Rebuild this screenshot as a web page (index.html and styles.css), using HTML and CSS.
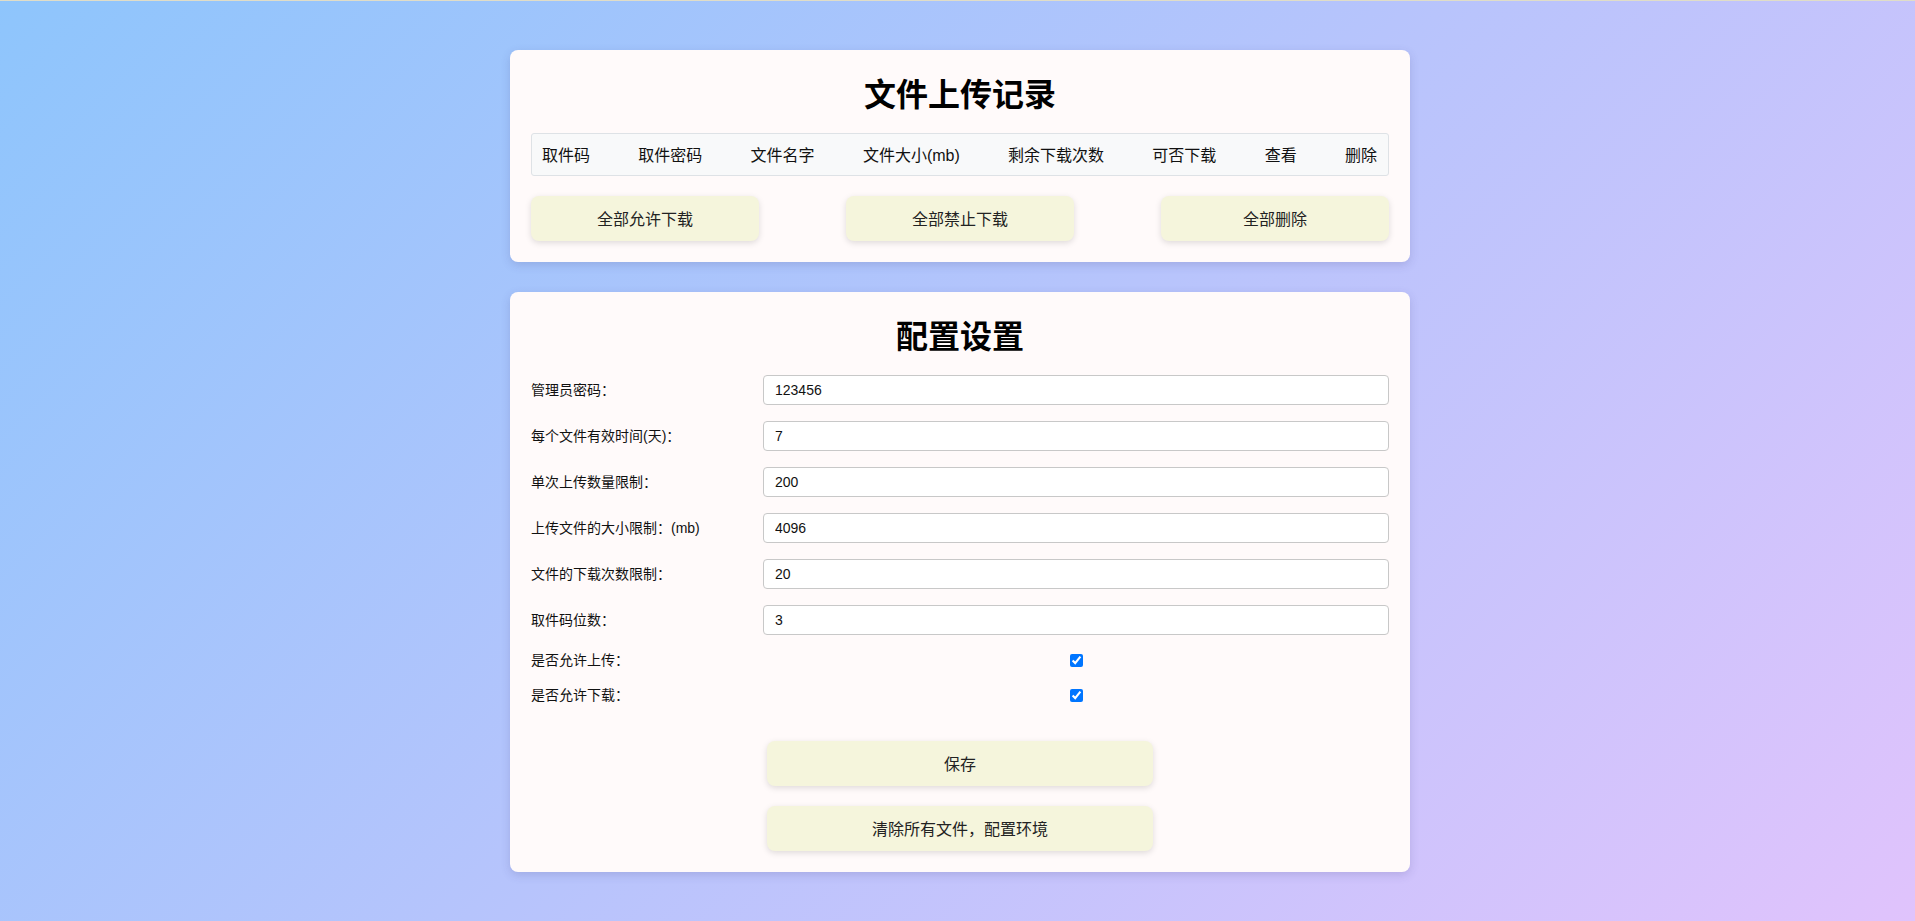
FILE: index.html
```html
<!DOCTYPE html>
<html lang="zh-CN">
<head>
<meta charset="utf-8">
<title>管理</title>
<link rel="stylesheet" href="styles.css">
</head>
<body>
<main class="page">
  <section class="card">
    <h1 class="card-title">文件上传记录</h1>
    <div class="record-head">
      <span>取件码</span>
      <span>取件密码</span>
      <span>文件名字</span>
      <span>文件大小(mb)</span>
      <span>剩余下载次数</span>
      <span>可否下载</span>
      <span>查看</span>
      <span>删除</span>
    </div>
    <div class="bulk-actions">
      <button class="btn btn-bulk">全部允许下载</button>
      <button class="btn btn-bulk">全部禁止下载</button>
      <button class="btn btn-bulk">全部删除</button>
    </div>
  </section>

  <section class="card">
    <h1 class="card-title">配置设置</h1>
    <form class="config-form">
      <div class="form-row">
        <label class="form-label">管理员密码：</label>
        <div class="form-field"><input class="text-input" type="text" value="123456"></div>
      </div>
      <div class="form-row">
        <label class="form-label">每个文件有效时间(天)：</label>
        <div class="form-field"><input class="text-input" type="text" value="7"></div>
      </div>
      <div class="form-row">
        <label class="form-label">单次上传数量限制：</label>
        <div class="form-field"><input class="text-input" type="text" value="200"></div>
      </div>
      <div class="form-row">
        <label class="form-label">上传文件的大小限制：(mb)</label>
        <div class="form-field"><input class="text-input" type="text" value="4096"></div>
      </div>
      <div class="form-row">
        <label class="form-label">文件的下载次数限制：</label>
        <div class="form-field"><input class="text-input" type="text" value="20"></div>
      </div>
      <div class="form-row">
        <label class="form-label">取件码位数：</label>
        <div class="form-field"><input class="text-input" type="text" value="3"></div>
      </div>
      <div class="form-row form-row-check">
        <label class="form-label">是否允许上传：</label>
        <div class="form-field form-field-center"><input class="check" type="checkbox" checked></div>
      </div>
      <div class="form-row form-row-check">
        <label class="form-label">是否允许下载：</label>
        <div class="form-field form-field-center"><input class="check" type="checkbox" checked></div>
      </div>
    </form>
    <div class="main-actions">
      <button class="btn btn-wide">保存</button>
      <button class="btn btn-wide">清除所有文件，配置环境</button>
    </div>
  </section>
</main>
</body>
</html>
```

FILE: styles.css
```css
html, body {
  margin: 0;
  padding: 0;
}

body {
  min-height: 100vh;
  box-sizing: border-box;
  border-top: 1px solid #e0ddc8;
  background: linear-gradient(135deg, #8ec5fc 0%, #e0c3fc 100%);
  font-family: "Liberation Sans", "Noto Sans CJK SC", sans-serif;
  color: #000;
  padding-left: 5px;
}

.page {
  width: 900px;
  margin: 0 auto;
  padding-top: 49px;
  display: flex;
  flex-direction: column;
  gap: 30px;
}

.card {
  box-sizing: border-box;
  width: 900px;
  padding: 21px;
  background: #fffafa;
  border-radius: 8px;
  box-shadow: 0 3px 10px rgba(60, 60, 120, 0.18);
}

.card-title {
  margin: -2px 0 18px;
  font-family: "Noto Sans CJK SC", sans-serif;
  font-size: 32px;
  line-height: 46px;
  font-weight: 700;
  text-align: center;
  color: #000;
}

.record-head {
  box-sizing: border-box;
  height: 43px;
  display: flex;
  align-items: center;
  justify-content: space-between;
  padding: 0 11px 2px 10px;
  background: #f8f9fa;
  border: 1px solid #dee2e6;
  border-radius: 3px;
  font-size: 16px;
  color: #111;
}

.bulk-actions {
  margin-top: 20px;
  display: flex;
  justify-content: space-between;
}

.btn {
  box-sizing: border-box;
  height: 45px;
  border: none;
  border-radius: 8px;
  background: #f5f5dc;
  box-shadow: 0 2px 6px rgba(0, 0, 0, 0.13);
  font-family: "Liberation Sans", "Noto Sans CJK SC", sans-serif;
  font-size: 16px;
  color: #222;
  padding: 0 0 2px;
}

.btn-bulk {
  width: 228px;
}

.config-form {
  display: flex;
  flex-direction: column;
  gap: 16px;
}

.form-row {
  display: flex;
  align-items: center;
  height: 30px;
}

.form-row-check {
  height: 19px;
}

.form-label {
  width: 232px;
  flex: none;
  font-size: 14px;
  line-height: 19px;
  color: #111;
}

.form-field {
  flex: 1;
  display: flex;
}

.form-field-center {
  justify-content: center;
}

.text-input {
  box-sizing: border-box;
  width: 100%;
  height: 30px;
  padding: 0 11px;
  border: 1px solid #c8c8c8;
  border-radius: 4px;
  background: #fff;
  font-family: "Liberation Sans", sans-serif;
  font-size: 14px;
  color: #111;
}

.check {
  width: 13px;
  height: 13px;
  margin: 3px 0;
}

.main-actions {
  margin-top: 36px;
  display: flex;
  flex-direction: column;
  align-items: center;
  gap: 20px;
}

.btn-wide {
  width: 386px;
}
```
